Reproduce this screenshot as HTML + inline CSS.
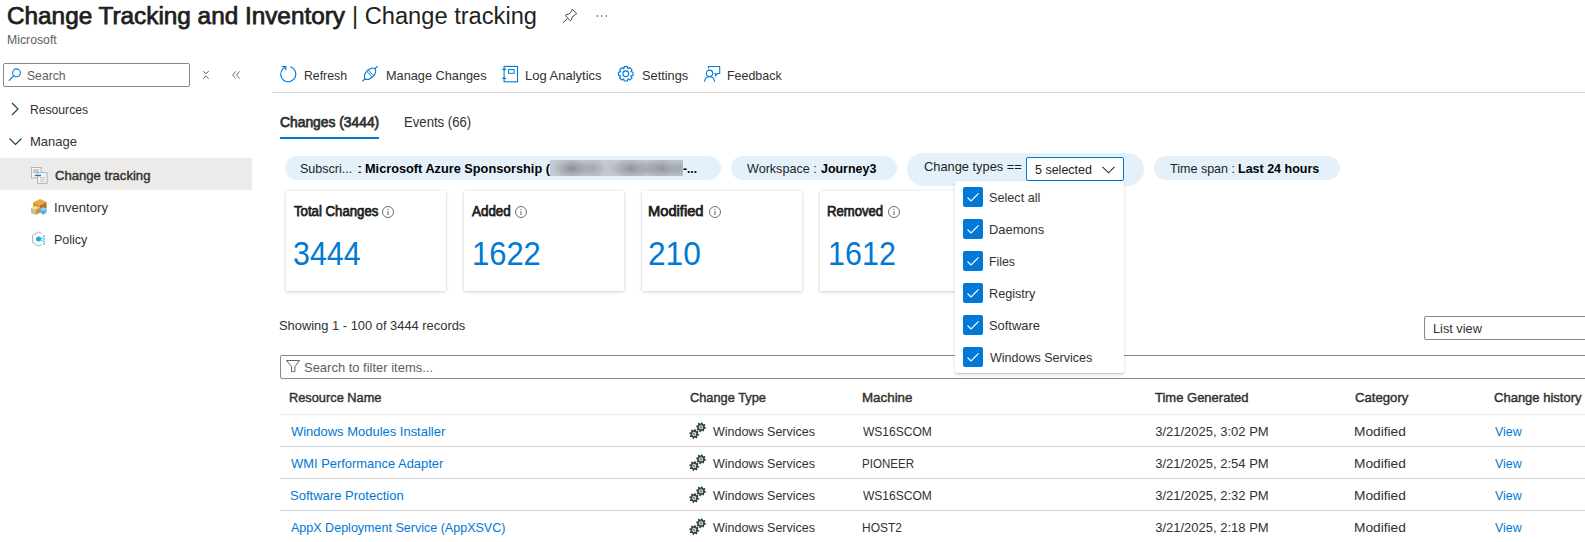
<!DOCTYPE html>
<html><head><meta charset="utf-8">
<style>
*{box-sizing:border-box;margin:0;padding:0}
html,body{width:1585px;height:542px;overflow:hidden;background:#fff}
body{font-family:"Liberation Sans",sans-serif;color:#323130;position:relative}
.a{position:absolute;white-space:nowrap;transform-origin:0 0}
svg{position:absolute;overflow:visible}
</style></head><body>
<svg style="left:562px;top:8px" width="16" height="16" viewBox="0 0 16 16"><path d="M10.3 1.2 L14.7 5.5 L13.4 6.4 L10 9.3 L9.6 11.3 L8.5 12.8 L3.2 7.5 L4.7 6.4 L6.8 6.2 L9.6 3.4 L10 1.7 Z" fill="none" stroke="#323130" stroke-width="0.95" stroke-linejoin="round"/><path d="M1.3 14.6 L5.3 10.5" stroke="#323130" stroke-width="1"/></svg>
<svg style="left:596px;top:14px" width="12" height="4" viewBox="0 0 12 4"><circle cx="1.4" cy="1.9" r="0.75" fill="#323130"/><circle cx="5.8" cy="1.9" r="0.75" fill="#323130"/><circle cx="10.4" cy="1.9" r="0.75" fill="#323130"/></svg>
<div class="a" style="left:3px;top:63px;width:187px;height:24px;border:1px solid #8a8886;border-radius:2px"></div>
<svg style="left:8px;top:67px" width="14" height="14" viewBox="0 0 14 14"><circle cx="8.5" cy="5.8" r="3.9" fill="none" stroke="#0078d4" stroke-width="1.1"/><path d="M5.7 8.6 L1.2 13.3" stroke="#0078d4" stroke-width="1.2" stroke-linecap="round"/></svg>
<svg style="left:203px;top:71px" width="6" height="8" viewBox="0 0 6 8"><path d="M0.3 0.3 L2.7 2.7 L5.7 0.3 M0.3 7.6 L2.7 5 L5.7 7.6" fill="none" stroke="#484644" stroke-width="0.9"/></svg>
<svg style="left:232px;top:71px" width="8" height="8" viewBox="0 0 8 8"><path d="M3.6 0.3 L0.7 4 L3.6 7.6 M7.5 0.3 L4.5 4 L7.5 7.6" fill="none" stroke="#605e5c" stroke-width="0.9"/></svg>
<svg style="left:11px;top:102px" width="8" height="14" viewBox="0 0 8 14"><path d="M1 1 L7 7 L1 13" fill="none" stroke="#323130" stroke-width="1.1"/></svg>
<svg style="left:9px;top:138px" width="13" height="7" viewBox="0 0 13 7"><path d="M0.5 0.5 L6.5 6.5 L12.5 0.5" fill="none" stroke="#323130" stroke-width="1.1"/></svg>
<div class="a" style="left:0;top:158px;width:252px;height:32px;background:#edebe9"></div>
<svg style="left:31px;top:167px" width="17" height="17" viewBox="0 0 17 17">
<rect x="0.5" y="0.5" width="9.6" height="10.4" fill="#f3f3f3" stroke="#b0b0b0" stroke-width="0.9"/>
<rect x="2.2" y="2.2" width="5.5" height="4" fill="#c4c4c4"/>
<rect x="6.5" y="5.5" width="9.6" height="10.8" fill="#f3f3f3" stroke="#b0b0b0" stroke-width="0.9"/>
<path d="M9 10.5h5M9 12.3h5M9 14h4" stroke="#c8c8c8" stroke-width="1"/>
<path d="M3.8 8.5h6.2" stroke="#0078d4" stroke-width="1.2"/><path d="M8.6 7.4 L10.3 8.5 L8.6 9.6Z" fill="#0078d4"/></svg>
<svg style="left:31px;top:199px" width="16" height="16" viewBox="0 0 16 16">
<path d="M2.2 3.5 L9 0 L15.6 3 L8.8 6.6 Z" fill="#eda73a"/>
<path d="M2.2 3.5 L8.8 6.6 L8.8 12.5 L2.2 9.5 Z" fill="#d48a22"/>
<path d="M8.8 6.6 L15.6 3 L15.6 9 L8.8 12.5 Z" fill="#a8742a"/>
<path d="M0 8.8 L4.6 6.8 L9 8.8 L4.6 10.9 Z" fill="#f2d890"/>
<path d="M0 8.8 L4.6 10.9 L4.6 16 L0 13.8 Z" fill="#d8bd72"/>
<path d="M4.6 10.9 L9 8.8 L9 13.8 L4.6 16 Z" fill="#b89a55"/>
<path d="M12.3 8.2 L15.6 10 L15.6 13.8 L12.3 15.6 L9 13.8 L9 10 Z" fill="#5fb4ea"/>
<path d="M9 10 L12.3 8.2 L15.6 10 L12.3 11.8 Z" fill="#9bd3f5"/>
<path d="M12.3 11.8 L12.3 15.6" stroke="#3e96d4" stroke-width="0.6"/></svg>
<svg style="left:31px;top:231px" width="17" height="17" viewBox="0 0 17 17">
<path d="M10.6 2.6 L7.5 0.9 L1.6 4.4 L1.6 11.6 L7.5 15.1 L10.6 13.4" fill="none" stroke="#a6a6a6" stroke-width="0.9"/>
<circle cx="7.5" cy="8" r="2.5" fill="#1fa8dc"/>
<rect x="10.2" y="6" width="1.6" height="1.6" fill="#40d0f5"/><rect x="10.2" y="8.6" width="1.6" height="1.6" fill="#40d0f5"/>
<rect x="12.3" y="4.3" width="1.6" height="1.6" fill="#30bdf0"/><rect x="12.3" y="7" width="1.6" height="1.6" fill="#30bdf0"/><rect x="12.3" y="9.7" width="1.6" height="1.6" fill="#30bdf0"/><rect x="12.3" y="12.2" width="1.6" height="1.6" fill="#30bdf0"/>
</svg>
<svg style="left:279px;top:65px" width="18" height="18" viewBox="0 0 18 18"><path d="M3.9 3.8 A7.6 7.6 0 1 0 11.2 1.8" fill="none" stroke="#0078d4" stroke-width="1.15"/><path d="M2.8 1.5 L6.8 1.5 L6.8 5.3" fill="none" stroke="#0078d4" stroke-width="1.15"/><path d="M3.9 3.8 L6.6 1.6" stroke="#0078d4" stroke-width="1.15"/></svg>
<svg style="left:361px;top:65px" width="17" height="17" viewBox="0 0 17 17"><path d="M1.4 16.4 L4.4 13.4 M13.6 4 L16.6 1.2" stroke="#0078d4" stroke-width="1.15"/><ellipse cx="9" cy="8.8" rx="7" ry="4.1" transform="rotate(-45 9 8.8)" fill="none" stroke="#0078d4" stroke-width="1.1"/><path d="M5.6 6.3 L11.5 12.2 M6.9 5.0 L12.8 10.9" stroke="#0078d4" stroke-width="0.9"/></svg>
<svg style="left:502px;top:65px" width="17" height="18" viewBox="0 0 17 18"><rect x="2.1" y="1.4" width="13.4" height="15.4" fill="none" stroke="#0078d4" stroke-width="1.1"/><rect x="6.5" y="4.6" width="5.6" height="3.7" fill="none" stroke="#0078d4" stroke-width="1"/><path d="M0.3 4.4 H4 M0.3 13.4 H4" stroke="#0078d4" stroke-width="1.1"/></svg>
<svg style="left:617px;top:65px" width="18" height="18" viewBox="0 0 18 18"><path d="M14.04 6.83 L16.02 7.19 L16.02 10.41 L14.04 10.77 L13.90 11.11 L15.05 12.76 L12.76 15.05 L11.11 13.90 L10.77 14.04 L10.41 16.02 L7.19 16.02 L6.83 14.04 L6.49 13.90 L4.84 15.05 L2.55 12.76 L3.70 11.11 L3.56 10.77 L1.58 10.41 L1.58 7.19 L3.56 6.83 L3.70 6.49 L2.55 4.84 L4.84 2.55 L6.49 3.70 L6.83 3.56 L7.19 1.58 L10.41 1.58 L10.77 3.56 L11.11 3.70 L12.76 2.55 L15.05 4.84 L13.90 6.49Z" fill="none" stroke="#0078d4" stroke-width="1.1" stroke-linejoin="round"/><circle cx="8.8" cy="8.8" r="2.9" fill="none" stroke="#0078d4" stroke-width="1.1"/></svg>
<svg style="left:703px;top:65px" width="18" height="18" viewBox="0 0 18 18"><path d="M5.4 3.6 V1.5 H16.7 V8.5 H14.4 L12.5 10.8 V8.5 H11.4" fill="none" stroke="#0078d4" stroke-width="1.1"/><circle cx="6.5" cy="8.3" r="3.2" fill="none" stroke="#0078d4" stroke-width="1.1"/><path d="M1.5 16.6 C1.8 13.5 4 11.8 6.5 11.8 C9 11.8 11.2 13.5 11.6 16.6" fill="none" stroke="#0078d4" stroke-width="1.1"/></svg>
<div class="a" style="left:272px;top:92px;width:1313px;height:1px;background:#d6d6d6"></div>
<div class="a" style="left:280px;top:137px;width:99px;height:2px;background:#0078d4"></div>
<div class="a" style="left:285px;top:156px;width:436px;height:24px;border-radius:12px;background:#e5f1fa"></div>
<div class="a" style="left:550px;top:160px;width:133px;height:16px;background:radial-gradient(20px 11px at 22px 8.5px,rgba(120,126,134,0.75),rgba(120,126,134,0)),radial-gradient(14px 11px at 43px 8.5px,rgba(120,126,134,0.45),rgba(120,126,134,0)),radial-gradient(12px 11px at 63px 8.5px,rgba(120,126,134,0.1),rgba(120,126,134,0)),radial-gradient(20px 11px at 81px 8.5px,rgba(120,126,134,0.7),rgba(120,126,134,0)),radial-gradient(12px 11px at 98px 8.5px,rgba(120,126,134,0.3),rgba(120,126,134,0)),radial-gradient(18px 11px at 112px 8.5px,rgba(120,126,134,0.7),rgba(120,126,134,0)),radial-gradient(12px 11px at 130px 8.5px,rgba(120,126,134,0.45),rgba(120,126,134,0)),#c6cbd1"></div>
<div class="a" style="left:731px;top:156px;width:166px;height:24px;border-radius:12px;background:#e5f1fa"></div>
<div class="a" style="left:907px;top:153px;width:237px;height:33px;border-radius:16.5px;background:#e5f1fa"></div>
<div class="a" style="left:1026px;top:157px;width:98px;height:24px;border:1px solid #0078d4;border-radius:2px;background:#fff"></div>
<svg style="left:1102px;top:166px" width="13" height="8" viewBox="0 0 13 8"><path d="M0.5 0.8 L6.5 6.8 L12.5 0.8" fill="none" stroke="#323130" stroke-width="1.1"/></svg>
<div class="a" style="left:1154px;top:156px;width:186px;height:24px;border-radius:12px;background:#e5f1fa"></div>
<div class="a" style="left:286px;top:191px;width:160px;height:100px;background:#fff;box-shadow:0 0 2.5px rgba(0,0,0,.15),0 1.6px 3.6px rgba(0,0,0,.1)"></div>
<div class="a" style="left:464px;top:191px;width:160px;height:100px;background:#fff;box-shadow:0 0 2.5px rgba(0,0,0,.15),0 1.6px 3.6px rgba(0,0,0,.1)"></div>
<div class="a" style="left:642px;top:191px;width:160px;height:100px;background:#fff;box-shadow:0 0 2.5px rgba(0,0,0,.15),0 1.6px 3.6px rgba(0,0,0,.1)"></div>
<div class="a" style="left:820px;top:191px;width:160px;height:100px;background:#fff;box-shadow:0 0 2.5px rgba(0,0,0,.15),0 1.6px 3.6px rgba(0,0,0,.1)"></div>
<svg style="left:382px;top:206px" width="12" height="12" viewBox="0 0 12 12"><circle cx="6" cy="6" r="5.5" fill="none" stroke="#605e5c" stroke-width="0.9"/><path d="M6 5v4" stroke="#605e5c" stroke-width="1"/><circle cx="6" cy="3.4" r="0.6" fill="#605e5c"/></svg>
<svg style="left:515px;top:206px" width="12" height="12" viewBox="0 0 12 12"><circle cx="6" cy="6" r="5.5" fill="none" stroke="#605e5c" stroke-width="0.9"/><path d="M6 5v4" stroke="#605e5c" stroke-width="1"/><circle cx="6" cy="3.4" r="0.6" fill="#605e5c"/></svg>
<svg style="left:709px;top:206px" width="12" height="12" viewBox="0 0 12 12"><circle cx="6" cy="6" r="5.5" fill="none" stroke="#605e5c" stroke-width="0.9"/><path d="M6 5v4" stroke="#605e5c" stroke-width="1"/><circle cx="6" cy="3.4" r="0.6" fill="#605e5c"/></svg>
<svg style="left:888px;top:206px" width="12" height="12" viewBox="0 0 12 12"><circle cx="6" cy="6" r="5.5" fill="none" stroke="#605e5c" stroke-width="0.9"/><path d="M6 5v4" stroke="#605e5c" stroke-width="1"/><circle cx="6" cy="3.4" r="0.6" fill="#605e5c"/></svg>
<div class="a" style="left:1424px;top:316px;width:170px;height:24px;border:1px solid #8a8886;border-radius:2px"></div>
<div class="a" style="left:280px;top:355px;width:1320px;height:24px;border:1px solid #8a8886;border-radius:2px"></div>
<svg style="left:286px;top:360px" width="14" height="13" viewBox="0 0 14 13"><path d="M0.5 0.5 L13.6 0.5 L8.9 6.5 L8.9 11.6 L5.5 11.6 L5.5 6.5 Z" fill="none" stroke="#605e5c" stroke-width="0.95" stroke-linejoin="round"/></svg>
<div class="a" style="left:280px;top:414px;width:1305px;height:1px;background:#edebe9"></div>
<div class="a" style="left:280px;top:446px;width:1305px;height:1px;background:#d2d2d2"></div>
<div class="a" style="left:280px;top:478px;width:1305px;height:1px;background:#d2d2d2"></div>
<div class="a" style="left:280px;top:510px;width:1305px;height:1px;background:#d2d2d2"></div>
<svg style="left:689px;top:422px" width="18" height="18" viewBox="0 0 18 18"><g fill="#444"><path d="M10.18 12.49 L9.98 13.45 L8.55 13.79 L8.14 14.41 L8.37 15.87 L7.56 16.41 L6.30 15.64 L5.57 15.78 L4.71 16.98 L3.75 16.78 L3.41 15.35 L2.79 14.94 L1.33 15.17 L0.79 14.36 L1.56 13.10 L1.42 12.37 L0.22 11.51 L0.42 10.55 L1.85 10.21 L2.26 9.59 L2.03 8.13 L2.84 7.59 L4.10 8.36 L4.83 8.22 L5.69 7.02 L6.65 7.22 L6.99 8.65 L7.61 9.06 L9.07 8.83 L9.61 9.64 L8.84 10.90 L8.98 11.63Z"/><path d="M16.98 5.69 L16.78 6.65 L15.35 6.99 L14.94 7.61 L15.17 9.07 L14.36 9.61 L13.10 8.84 L12.37 8.98 L11.51 10.18 L10.55 9.98 L10.21 8.55 L9.59 8.14 L8.13 8.37 L7.59 7.56 L8.36 6.30 L8.22 5.57 L7.02 4.71 L7.22 3.75 L8.65 3.41 L9.06 2.79 L8.83 1.33 L9.64 0.79 L10.90 1.56 L11.63 1.42 L12.49 0.22 L13.45 0.42 L13.79 1.85 L14.41 2.26 L15.87 2.03 L16.41 2.84 L15.64 4.10 L15.78 4.83Z"/></g><circle cx="5.2" cy="12" r="2" fill="#fff"/><circle cx="5.2" cy="12" r="1.2" fill="#2d9fe0"/><circle cx="12" cy="5.2" r="2" fill="#fff"/><circle cx="12" cy="5.2" r="1.2" fill="#2d9fe0"/></svg>
<svg style="left:689px;top:454px" width="18" height="18" viewBox="0 0 18 18"><g fill="#444"><path d="M10.18 12.49 L9.98 13.45 L8.55 13.79 L8.14 14.41 L8.37 15.87 L7.56 16.41 L6.30 15.64 L5.57 15.78 L4.71 16.98 L3.75 16.78 L3.41 15.35 L2.79 14.94 L1.33 15.17 L0.79 14.36 L1.56 13.10 L1.42 12.37 L0.22 11.51 L0.42 10.55 L1.85 10.21 L2.26 9.59 L2.03 8.13 L2.84 7.59 L4.10 8.36 L4.83 8.22 L5.69 7.02 L6.65 7.22 L6.99 8.65 L7.61 9.06 L9.07 8.83 L9.61 9.64 L8.84 10.90 L8.98 11.63Z"/><path d="M16.98 5.69 L16.78 6.65 L15.35 6.99 L14.94 7.61 L15.17 9.07 L14.36 9.61 L13.10 8.84 L12.37 8.98 L11.51 10.18 L10.55 9.98 L10.21 8.55 L9.59 8.14 L8.13 8.37 L7.59 7.56 L8.36 6.30 L8.22 5.57 L7.02 4.71 L7.22 3.75 L8.65 3.41 L9.06 2.79 L8.83 1.33 L9.64 0.79 L10.90 1.56 L11.63 1.42 L12.49 0.22 L13.45 0.42 L13.79 1.85 L14.41 2.26 L15.87 2.03 L16.41 2.84 L15.64 4.10 L15.78 4.83Z"/></g><circle cx="5.2" cy="12" r="2" fill="#fff"/><circle cx="5.2" cy="12" r="1.2" fill="#2d9fe0"/><circle cx="12" cy="5.2" r="2" fill="#fff"/><circle cx="12" cy="5.2" r="1.2" fill="#2d9fe0"/></svg>
<svg style="left:689px;top:486px" width="18" height="18" viewBox="0 0 18 18"><g fill="#444"><path d="M10.18 12.49 L9.98 13.45 L8.55 13.79 L8.14 14.41 L8.37 15.87 L7.56 16.41 L6.30 15.64 L5.57 15.78 L4.71 16.98 L3.75 16.78 L3.41 15.35 L2.79 14.94 L1.33 15.17 L0.79 14.36 L1.56 13.10 L1.42 12.37 L0.22 11.51 L0.42 10.55 L1.85 10.21 L2.26 9.59 L2.03 8.13 L2.84 7.59 L4.10 8.36 L4.83 8.22 L5.69 7.02 L6.65 7.22 L6.99 8.65 L7.61 9.06 L9.07 8.83 L9.61 9.64 L8.84 10.90 L8.98 11.63Z"/><path d="M16.98 5.69 L16.78 6.65 L15.35 6.99 L14.94 7.61 L15.17 9.07 L14.36 9.61 L13.10 8.84 L12.37 8.98 L11.51 10.18 L10.55 9.98 L10.21 8.55 L9.59 8.14 L8.13 8.37 L7.59 7.56 L8.36 6.30 L8.22 5.57 L7.02 4.71 L7.22 3.75 L8.65 3.41 L9.06 2.79 L8.83 1.33 L9.64 0.79 L10.90 1.56 L11.63 1.42 L12.49 0.22 L13.45 0.42 L13.79 1.85 L14.41 2.26 L15.87 2.03 L16.41 2.84 L15.64 4.10 L15.78 4.83Z"/></g><circle cx="5.2" cy="12" r="2" fill="#fff"/><circle cx="5.2" cy="12" r="1.2" fill="#2d9fe0"/><circle cx="12" cy="5.2" r="2" fill="#fff"/><circle cx="12" cy="5.2" r="1.2" fill="#2d9fe0"/></svg>
<svg style="left:689px;top:518px" width="18" height="18" viewBox="0 0 18 18"><g fill="#444"><path d="M10.18 12.49 L9.98 13.45 L8.55 13.79 L8.14 14.41 L8.37 15.87 L7.56 16.41 L6.30 15.64 L5.57 15.78 L4.71 16.98 L3.75 16.78 L3.41 15.35 L2.79 14.94 L1.33 15.17 L0.79 14.36 L1.56 13.10 L1.42 12.37 L0.22 11.51 L0.42 10.55 L1.85 10.21 L2.26 9.59 L2.03 8.13 L2.84 7.59 L4.10 8.36 L4.83 8.22 L5.69 7.02 L6.65 7.22 L6.99 8.65 L7.61 9.06 L9.07 8.83 L9.61 9.64 L8.84 10.90 L8.98 11.63Z"/><path d="M16.98 5.69 L16.78 6.65 L15.35 6.99 L14.94 7.61 L15.17 9.07 L14.36 9.61 L13.10 8.84 L12.37 8.98 L11.51 10.18 L10.55 9.98 L10.21 8.55 L9.59 8.14 L8.13 8.37 L7.59 7.56 L8.36 6.30 L8.22 5.57 L7.02 4.71 L7.22 3.75 L8.65 3.41 L9.06 2.79 L8.83 1.33 L9.64 0.79 L10.90 1.56 L11.63 1.42 L12.49 0.22 L13.45 0.42 L13.79 1.85 L14.41 2.26 L15.87 2.03 L16.41 2.84 L15.64 4.10 L15.78 4.83Z"/></g><circle cx="5.2" cy="12" r="2" fill="#fff"/><circle cx="5.2" cy="12" r="1.2" fill="#2d9fe0"/><circle cx="12" cy="5.2" r="2" fill="#fff"/><circle cx="12" cy="5.2" r="1.2" fill="#2d9fe0"/></svg>
<div class="a" id="title1" style="left:6.94px;top:-4px;font-size:23px;line-height:40px;color:#201f1e;-webkit-text-stroke:0.75px #201f1e;transform:scaleX(1.0573);">Change Tracking and Inventory</div>
<div class="a" id="title2" style="left:352.33px;top:-4px;font-size:23px;line-height:40px;color:#201f1e;transform:scaleX(1.0284);">| Change tracking</div>
<div class="a" id="ms" style="left:6.98px;top:30px;font-size:12px;line-height:20px;color:#605e5c;transform:scaleX(1.0208);">Microsoft</div>
<div class="a" id="srch" style="left:27.45px;top:66px;font-size:13px;line-height:20px;color:#605e5c;transform:scaleX(0.9358);">Search</div>
<div class="a" id="res" style="left:30.45px;top:100px;font-size:13px;line-height:20px;color:#323130;transform:scaleX(0.9344);">Resources</div>
<div class="a" id="man" style="left:30.39px;top:132px;font-size:13px;line-height:20px;color:#323130;transform:scaleX(1.0005);">Manage</div>
<div class="a" id="ct" style="left:55.42px;top:166px;font-size:13px;line-height:20px;color:#323130;-webkit-text-stroke:0.42px #323130;transform:scaleX(1.0079);">Change tracking</div>
<div class="a" id="inv" style="left:54.39px;top:198px;font-size:13px;line-height:20px;color:#323130;transform:scaleX(1.0099);">Inventory</div>
<div class="a" id="pol" style="left:54.45px;top:230px;font-size:13px;line-height:20px;color:#323130;transform:scaleX(0.9599);">Policy</div>
<div class="a" id="tb1" style="left:303.80px;top:66px;font-size:13px;line-height:20px;color:#323130;transform:scaleX(0.9437);">Refresh</div>
<div class="a" id="tb2" style="left:385.61px;top:66px;font-size:13px;line-height:20px;color:#323130;transform:scaleX(0.9793);">Manage Changes</div>
<div class="a" id="tb3" style="left:525.39px;top:66px;font-size:13px;line-height:20px;color:#323130;transform:scaleX(0.9987);">Log Analytics</div>
<div class="a" id="tb4" style="left:641.64px;top:66px;font-size:13px;line-height:20px;color:#323130;transform:scaleX(0.9830);">Settings</div>
<div class="a" id="tb5" style="left:727.01px;top:66px;font-size:13px;line-height:20px;color:#323130;transform:scaleX(0.9567);">Feedback</div>
<div class="a" id="tab1" style="left:280.41px;top:112px;font-size:14px;line-height:20px;color:#323130;-webkit-text-stroke:0.75px #323130;transform:scaleX(0.9883);">Changes (3444)</div>
<div class="a" id="tab2" style="left:403.65px;top:112px;font-size:14px;line-height:20px;color:#323130;transform:scaleX(0.9388);">Events (66)</div>
<div class="a" id="p1a" style="left:300.23px;top:159px;font-size:13px;line-height:20px;color:#201f1e;transform:scaleX(0.9626);">Subscri...</div>
<div class="a" id="p1s" style="left:356.26px;top:159px;font-size:13px;line-height:20px;color:#201f1e;transform:scaleX(2.0423);">:</div>
<div class="a" id="p1b" style="left:364.85px;top:159px;font-size:13px;line-height:20px;color:#000;font-weight:bold;transform:scaleX(0.9800);">Microsoft Azure Sponsorship (</div>
<div class="a" id="p1c" style="left:683.00px;top:159px;font-size:13px;line-height:20px;color:#000;font-weight:bold;transform:scaleX(0.9240);">-...</div>
<div class="a" id="p2a" style="left:747.20px;top:159px;font-size:13px;line-height:20px;color:#201f1e;transform:scaleX(0.9676);">Workspace :</div>
<div class="a" id="p2b" style="left:821.00px;top:159px;font-size:13px;line-height:20px;color:#000;font-weight:bold;transform:scaleX(0.9570);">Journey3</div>
<div class="a" id="p3" style="left:923.61px;top:157px;font-size:13px;line-height:20px;color:#201f1e;transform:scaleX(0.9870);">Change types ==</div>
<div class="a" id="sel" style="left:1034.82px;top:160px;font-size:13px;line-height:20px;color:#201f1e;transform:scaleX(0.9610);">5 selected</div>
<div class="a" id="p4a" style="left:1170.39px;top:159px;font-size:13px;line-height:20px;color:#201f1e;transform:scaleX(0.9645);">Time span :</div>
<div class="a" id="p4b" style="left:1238.28px;top:159px;font-size:13px;line-height:20px;color:#000;font-weight:bold;transform:scaleX(0.9612);">Last 24 hours</div>
<div class="a" id="c1" style="left:293.63px;top:201px;font-size:14px;line-height:20px;color:#201f1e;-webkit-text-stroke:0.75px #201f1e;transform:scaleX(0.9425);">Total Changes</div>
<div class="a" id="c2" style="left:471.83px;top:201px;font-size:14px;line-height:20px;color:#201f1e;-webkit-text-stroke:0.75px #201f1e;transform:scaleX(0.9566);">Added</div>
<div class="a" id="c3" style="left:648.29px;top:201px;font-size:14px;line-height:20px;color:#201f1e;-webkit-text-stroke:0.75px #201f1e;transform:scaleX(1.0486);">Modified</div>
<div class="a" id="c4" style="left:827.22px;top:201px;font-size:14px;line-height:20px;color:#201f1e;-webkit-text-stroke:0.75px #201f1e;transform:scaleX(0.9354);">Removed</div>
<div class="a" id="n1" style="left:293.10px;top:234px;font-size:33px;line-height:40px;color:#0078d4;transform:scaleX(0.9203);">3444</div>
<div class="a" id="n2" style="left:471.56px;top:234px;font-size:33px;line-height:40px;color:#0078d4;transform:scaleX(0.9376);">1622</div>
<div class="a" id="n3" style="left:648.47px;top:234px;font-size:33px;line-height:40px;color:#0078d4;transform:scaleX(0.9602);">210</div>
<div class="a" id="n4" style="left:828.18px;top:234px;font-size:33px;line-height:40px;color:#0078d4;transform:scaleX(0.9242);">1612</div>
<div class="a" id="show" style="left:279.41px;top:316px;font-size:13px;line-height:20px;color:#323130;transform:scaleX(0.9915);">Showing 1 - 100 of 3444 records</div>
<div class="a" id="lv" style="left:1432.61px;top:319px;font-size:13px;line-height:20px;color:#323130;transform:scaleX(0.9796);">List view</div>
<div class="a" id="flt" style="left:303.97px;top:358px;font-size:13px;line-height:20px;color:#605e5c;transform:scaleX(0.9977);">Search to filter items...</div>
<div class="a" id="h1" style="left:289.19px;top:388px;font-size:13px;line-height:20px;color:#323130;-webkit-text-stroke:0.42px #323130;transform:scaleX(0.9839);">Resource Name</div>
<div class="a" id="h2" style="left:689.81px;top:388px;font-size:13px;line-height:20px;color:#323130;-webkit-text-stroke:0.42px #323130;transform:scaleX(0.9846);">Change Type</div>
<div class="a" id="h3" style="left:861.78px;top:388px;font-size:13px;line-height:20px;color:#323130;-webkit-text-stroke:0.42px #323130;transform:scaleX(1.0266);">Machine</div>
<div class="a" id="h4" style="left:1155.19px;top:388px;font-size:13px;line-height:20px;color:#323130;-webkit-text-stroke:0.42px #323130;transform:scaleX(1.0003);">Time Generated</div>
<div class="a" id="h5" style="left:1354.81px;top:388px;font-size:13px;line-height:20px;color:#323130;-webkit-text-stroke:0.42px #323130;transform:scaleX(1.0120);">Category</div>
<div class="a" id="h6" style="left:1494.39px;top:388px;font-size:13px;line-height:20px;color:#323130;-webkit-text-stroke:0.42px #323130;transform:scaleX(1.0015);">Change history</div>
<div class="a" id="r0n" style="left:290.60px;top:422px;font-size:13px;line-height:20px;color:#0078d4;transform:scaleX(0.9975);">Windows Modules Installer</div>
<div class="a" id="r0t" style="left:712.98px;top:422px;font-size:13px;line-height:20px;color:#323130;transform:scaleX(0.9600);">Windows Services</div>
<div class="a" id="r0m" style="left:862.58px;top:422px;font-size:13px;line-height:20px;color:#323130;transform:scaleX(0.9246);">WS16SCOM</div>
<div class="a" id="r0d" style="left:1155.20px;top:422px;font-size:13px;line-height:20px;color:#323130;">3/21/2025, 3:02 PM</div>
<div class="a" id="r0c" style="left:1353.77px;top:422px;font-size:13px;line-height:20px;color:#323130;transform:scaleX(1.0547);">Modified</div>
<div class="a" id="r0v" style="left:1494.62px;top:422px;font-size:13px;line-height:20px;color:#0078d4;transform:scaleX(0.9550);">View</div>
<div class="a" id="r1n" style="left:290.60px;top:454px;font-size:13px;line-height:20px;color:#0078d4;transform:scaleX(0.9942);">WMI Performance Adapter</div>
<div class="a" id="r1t" style="left:712.98px;top:454px;font-size:13px;line-height:20px;color:#323130;transform:scaleX(0.9600);">Windows Services</div>
<div class="a" id="r1m" style="left:861.67px;top:454px;font-size:13px;line-height:20px;color:#323130;transform:scaleX(0.8881);">PIONEER</div>
<div class="a" id="r1d" style="left:1155.20px;top:454px;font-size:13px;line-height:20px;color:#323130;">3/21/2025, 2:54 PM</div>
<div class="a" id="r1c" style="left:1353.77px;top:454px;font-size:13px;line-height:20px;color:#323130;transform:scaleX(1.0547);">Modified</div>
<div class="a" id="r1v" style="left:1494.62px;top:454px;font-size:13px;line-height:20px;color:#0078d4;transform:scaleX(0.9550);">View</div>
<div class="a" id="r2n" style="left:289.63px;top:486px;font-size:13px;line-height:20px;color:#0078d4;transform:scaleX(1.0028);">Software Protection</div>
<div class="a" id="r2t" style="left:712.98px;top:486px;font-size:13px;line-height:20px;color:#323130;transform:scaleX(0.9600);">Windows Services</div>
<div class="a" id="r2m" style="left:862.58px;top:486px;font-size:13px;line-height:20px;color:#323130;transform:scaleX(0.9246);">WS16SCOM</div>
<div class="a" id="r2d" style="left:1155.20px;top:486px;font-size:13px;line-height:20px;color:#323130;">3/21/2025, 2:32 PM</div>
<div class="a" id="r2c" style="left:1353.77px;top:486px;font-size:13px;line-height:20px;color:#323130;transform:scaleX(1.0547);">Modified</div>
<div class="a" id="r2v" style="left:1494.62px;top:486px;font-size:13px;line-height:20px;color:#0078d4;transform:scaleX(0.9550);">View</div>
<div class="a" id="r3n" style="left:290.59px;top:518px;font-size:13px;line-height:20px;color:#0078d4;transform:scaleX(0.9635);">AppX Deployment Service (AppXSVC)</div>
<div class="a" id="r3t" style="left:712.98px;top:518px;font-size:13px;line-height:20px;color:#323130;transform:scaleX(0.9600);">Windows Services</div>
<div class="a" id="r3m" style="left:861.65px;top:518px;font-size:13px;line-height:20px;color:#323130;transform:scaleX(0.9221);">HOST2</div>
<div class="a" id="r3d" style="left:1155.20px;top:518px;font-size:13px;line-height:20px;color:#323130;">3/21/2025, 2:18 PM</div>
<div class="a" id="r3c" style="left:1353.77px;top:518px;font-size:13px;line-height:20px;color:#323130;transform:scaleX(1.0547);">Modified</div>
<div class="a" id="r3v" style="left:1494.62px;top:518px;font-size:13px;line-height:20px;color:#0078d4;transform:scaleX(0.9550);">View</div>
<div class="a" style="left:955px;top:181px;width:169px;height:192px;background:#fff;border-radius:2px;box-shadow:0 1.6px 3.6px rgba(0,0,0,.13),0 .3px .9px rgba(0,0,0,.11)"></div>
<div class="a" style="left:963px;top:187px;width:20px;height:20px;border-radius:2px;background:#0078d4"></div>
<svg style="left:963px;top:187px" width="20" height="20" viewBox="0 0 20 20"><path d="M4.5 10.5 L8 14 L15.5 6.5" fill="none" stroke="#fff" stroke-width="1.1"/></svg>
<div class="a" style="left:963px;top:219px;width:20px;height:20px;border-radius:2px;background:#0078d4"></div>
<svg style="left:963px;top:219px" width="20" height="20" viewBox="0 0 20 20"><path d="M4.5 10.5 L8 14 L15.5 6.5" fill="none" stroke="#fff" stroke-width="1.1"/></svg>
<div class="a" style="left:963px;top:251px;width:20px;height:20px;border-radius:2px;background:#0078d4"></div>
<svg style="left:963px;top:251px" width="20" height="20" viewBox="0 0 20 20"><path d="M4.5 10.5 L8 14 L15.5 6.5" fill="none" stroke="#fff" stroke-width="1.1"/></svg>
<div class="a" style="left:963px;top:283px;width:20px;height:20px;border-radius:2px;background:#0078d4"></div>
<svg style="left:963px;top:283px" width="20" height="20" viewBox="0 0 20 20"><path d="M4.5 10.5 L8 14 L15.5 6.5" fill="none" stroke="#fff" stroke-width="1.1"/></svg>
<div class="a" style="left:963px;top:315px;width:20px;height:20px;border-radius:2px;background:#0078d4"></div>
<svg style="left:963px;top:315px" width="20" height="20" viewBox="0 0 20 20"><path d="M4.5 10.5 L8 14 L15.5 6.5" fill="none" stroke="#fff" stroke-width="1.1"/></svg>
<div class="a" style="left:963px;top:347px;width:20px;height:20px;border-radius:2px;background:#0078d4"></div>
<svg style="left:963px;top:347px" width="20" height="20" viewBox="0 0 20 20"><path d="M4.5 10.5 L8 14 L15.5 6.5" fill="none" stroke="#fff" stroke-width="1.1"/></svg>
<div class="a" id="d0" style="left:989.40px;top:188px;font-size:13px;line-height:20px;color:#323130;transform:scaleX(0.9738);">Select all</div>
<div class="a" id="d1" style="left:989.41px;top:220px;font-size:13px;line-height:20px;color:#323130;transform:scaleX(0.9912);">Daemons</div>
<div class="a" id="d2" style="left:989.46px;top:252px;font-size:13px;line-height:20px;color:#323130;transform:scaleX(0.9443);">Files</div>
<div class="a" id="d3" style="left:989.46px;top:284px;font-size:13px;line-height:20px;color:#323130;transform:scaleX(0.9728);">Registry</div>
<div class="a" id="d4" style="left:989.39px;top:316px;font-size:13px;line-height:20px;color:#323130;transform:scaleX(0.9929);">Software</div>
<div class="a" id="d5" style="left:990.41px;top:348px;font-size:13px;line-height:20px;color:#323130;transform:scaleX(0.9623);">Windows Services</div>
</body></html>
